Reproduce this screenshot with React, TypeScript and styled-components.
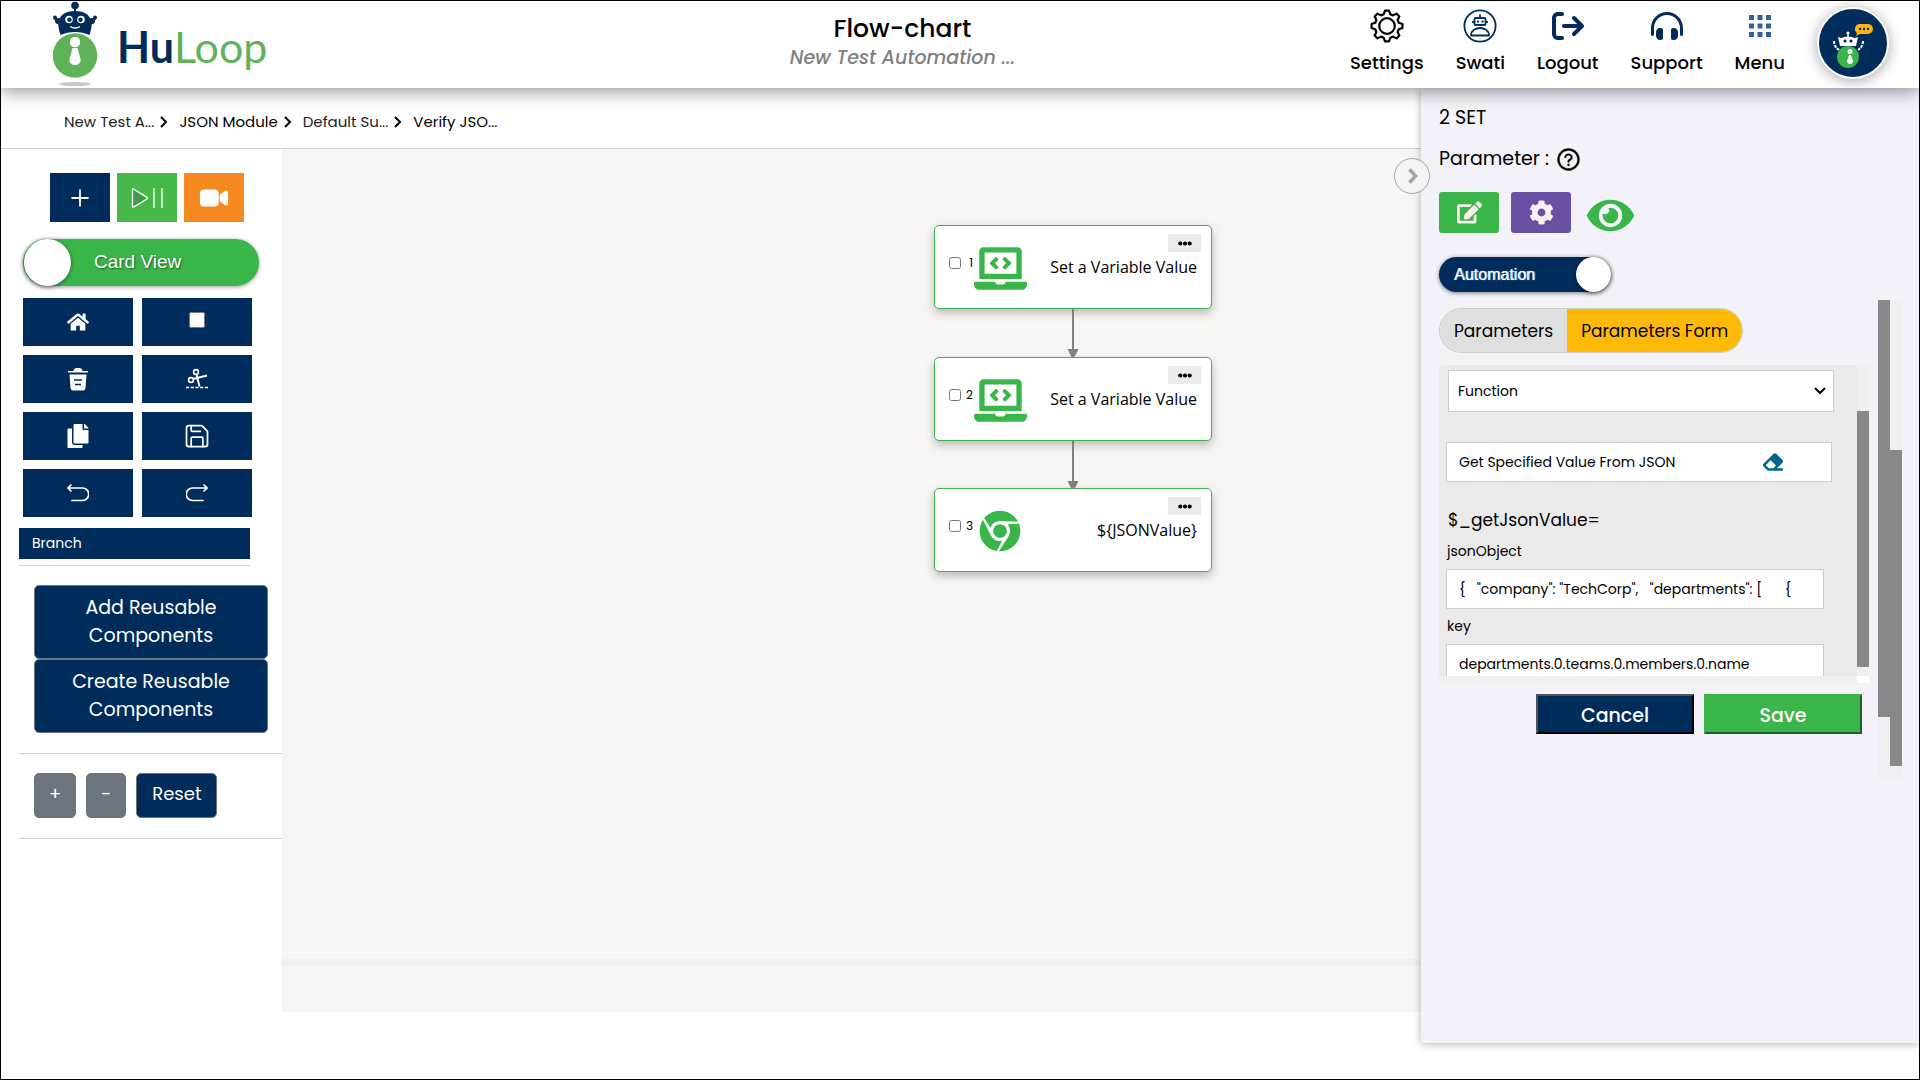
import React from "react";
import styled, { createGlobalStyle } from "styled-components";
import {
  FaHome, FaCopy, FaEdit, FaCog, FaEye, FaLaptopCode, FaChrome, FaEraser,
} from "react-icons/fa";
import { FaArrowRightFromBracket, FaHeadphonesSimple } from "react-icons/fa6";
import { IoVideocam } from "react-icons/io5";
import { AiOutlinePlus, AiOutlineQuestionCircle } from "react-icons/ai";
import { Save } from "lucide-react";

const navy = "#002c5b";
const green = "#3ab54a";

const GlobalStyle = createGlobalStyle`
  *, *::before, *::after { box-sizing: border-box; }
  body { margin: 0; background: #fff; color: #000; font-family: Poppins, Inter, "Open Sans", sans-serif; font-size: 16px; }
  button, input, select { font-family: inherit; margin: 0; }
  button { cursor: pointer; }
  h1, p { margin: 0; }
`;

const Page = styled.div`
  min-height: 100vh;
  border: 1px solid #000;
  display: flex;
  flex-direction: column;
`;

/* ---------- header ---------- */
const Header = styled.header`
  display: grid;
  grid-template-columns: 34% 26% 40%;
  height: 87px;
  background: #fff;
  box-shadow: 0 4px 16px rgba(0, 0, 0, 0.4);
  z-index: 3;
`;
const Logo = styled.a`
  display: flex;
  padding-left: 49px;
  gap: 17px;
  text-decoration: none;
`;
const Wordmark = styled.span`
  padding-top: 20px;
  font: 400 43px/52px Lato, sans-serif;
  color: #5fb257;
  b { color: ${navy}; font-weight: 700; }
`;
const Heading = styled.div`
  padding-top: 12px;
  text-align: center;
`;
const Title = styled.h1`
  font-size: 25px;
  line-height: 32px;
  font-weight: 500;
`;
const Subtitle = styled.p`
  font-size: 19px;
  line-height: 26px;
  font-weight: 500;
  font-style: italic;
  color: #808080;
`;
const Nav = styled.nav`
  display: flex;
  justify-content: flex-end;
  gap: 32px;
  padding-right: 30px;
`;
const NavItem = styled.a`
  display: flex;
  flex-direction: column;
  align-items: center;
  gap: 6px;
  padding-top: 8px;
  color: #000;
  text-decoration: none;
  font-size: 18px;
  line-height: 28px;
  font-weight: 500;
`;
const NavIcon = styled.span`
  display: flex;
  align-items: center;
  justify-content: center;
  height: 34px;
  color: ${navy};
`;
const Avatar = styled.button`
  width: 72px;
  height: 72px;
  margin-top: 6px;
  padding: 0;
  border: 2px solid #fff;
  border-radius: 50%;
  background: ${navy};
  box-shadow: 0 2px 14px rgba(0, 0, 0, 0.35);
`;

/* ---------- layout ---------- */
const Main = styled.main`
  display: flex;
  align-items: flex-start;
`;
const Work = styled.div`
  flex: 1;
  min-width: 0;
`;
const Crumbs = styled.nav`
  display: flex;
  align-items: center;
  height: 61px;
  padding: 7px 0 0 63px;
  border-bottom: 1px solid #ccc;
`;
const Crumb = styled.a<{ $soft?: boolean }>`
  font-size: 15px;
  line-height: 24px;
  color: ${(p) => (p.$soft ? "#222" : "#000")};
  text-decoration: none;
`;
const CrumbArrow = styled.svg`
  margin: 0 11px 0 6px;
`;
const Body = styled.div`
  display: flex;
`;
const Sidebar = styled.aside`
  width: 281px;
  flex: none;
  padding-left: 18px;
`;

/* ---------- sidebar ---------- */
const QuickRow = styled.div`
  display: flex;
  gap: 7px;
  padding: 24px 0 0 31px;
`;
const QuickButton = styled.button<{ $bg: string }>`
  display: flex;
  align-items: center;
  justify-content: center;
  width: 60px;
  height: 49px;
  padding: 0;
  border: 0;
  color: #fff;
  background: ${(p) => p.$bg};
`;
const HiddenCheck = styled.input`
  appearance: none;
  width: 0;
  height: 0;
  margin: 0;
`;
const CardToggle = styled.label`
  display: flex;
  align-items: center;
  width: 236px;
  height: 47px;
  margin: 17px 0 12px 4px;
  padding-left: 1px;
  border-radius: 24px;
  background: ${green};
  box-shadow: 0 1px 4px rgba(0, 0, 0, 0.4);
  color: #fff;
  font: 19px/24px "Liberation Sans", sans-serif;
  text-shadow: 1px 1px 2px rgba(0, 0, 0, 0.5);
`;
const Knob = styled.span<{ $size: number }>`
  width: ${(p) => p.$size}px;
  height: ${(p) => p.$size}px;
  border-radius: 50%;
  background: #fff;
  box-shadow: 0 1px 4px rgba(0, 0, 0, 0.5);
`;
const CardToggleText = styled.span`
  padding: 0 0 2px 23px;
`;
const ToolGrid = styled.div`
  display: grid;
  grid-template-columns: 110px 110px;
  gap: 9px;
  padding-left: 4px;
`;
const Tool = styled.button`
  display: flex;
  align-items: center;
  justify-content: center;
  height: 48px;
  padding: 0;
  border: 0;
  background: ${navy};
  color: #fff;
`;
const ToolLabel = styled.label`
  display: flex;
  align-items: center;
  justify-content: center;
  height: 48px;
  padding-bottom: 4px;
  background: ${navy};
`;
const ToolCheck = styled.input`
  width: 16px;
  height: 16px;
`;
const Branch = styled.button`
  display: block;
  width: 231px;
  height: 31px;
  margin-top: 11px;
  padding: 0 13px 2px;
  border: 0;
  background: ${navy};
  color: #fff;
  font-size: 14px;
  line-height: 24px;
  text-align: left;
`;
const Rule = styled.hr<{ $short?: boolean }>`
  height: 1px;
  margin: 0;
  margin-top: ${(p) => (p.$short ? 6 : 20)}px;
  margin-right: ${(p) => (p.$short ? 32 : 0)}px;
  border: 0;
  background: #d0d0d0;
`;
const Reusable = styled.div`
  display: flex;
  flex-direction: column;
  width: 234px;
  margin: 19px 0 0 15px;
`;
const ReusableButton = styled.button`
  height: 74px;
  padding: 0 24px;
  border: 1px solid #6c757d;
  border-radius: 5px;
  background: ${navy};
  color: #fff;
  font-size: 19px;
  line-height: 28px;
`;
const ZoomRow = styled.div`
  display: flex;
  gap: 10px;
  padding: 19px 0 0 15px;
`;
const ZoomButton = styled.button<{ $reset?: boolean }>`
  height: 45px;
  padding: 0 ${(p) => (p.$reset ? 15 : 14)}px 3px;
  border: 1px solid #6c757d;
  border-radius: 5px;
  background: ${(p) => (p.$reset ? navy : "#6c757d")};
  color: #fff;
  font-size: 18px;
  line-height: 28px;
`;

/* ---------- canvas ---------- */
const CanvasArea = styled.div`
  flex: 1;
  min-width: 0;
  height: calc(100vh - 217px);
  display: flex;
  flex-direction: column;
  background: #f7f6f5;
`;
const Canvas = styled.section`
  position: relative;
  flex: 1;
`;
const CanvasScroll = styled.div`
  height: 7px;
  margin-bottom: 46px;
  background: #f0f0f0;
`;
const Node = styled.article`
  position: absolute;
  display: flex;
  width: 278px;
  height: 84px;
  padding: 8px 10px 0 14px;
  border: 1px solid ${green};
  border-radius: 5px;
  background: #fff;
  box-shadow: 0 4px 10px rgba(0, 0, 0, 0.25);
`;
const NodeCheck = styled.label`
  display: flex;
  align-items: center;
  justify-content: space-between;
  width: 24px;
  height: 58px;
  font-size: 12px;
`;
const NodeBox = styled.input`
  width: 12px;
  height: 12px;
`;
const NodeIcon = styled.span`
  display: flex;
  align-items: center;
  justify-content: center;
  width: 54px;
  height: 68px;
  color: ${green};
`;
const NodeText = styled.div`
  flex: 1;
  display: flex;
  flex-direction: column;
  align-items: flex-end;
`;
const NodeMenu = styled.button`
  width: 33px;
  height: 18px;
  padding: 0;
  border: 0;
  background: #ebebeb;
  line-height: 0;
`;
const NodeLabel = styled.span`
  padding: 3px 4px 0 0;
  font: 16px/24px "Open Sans", "Noto Sans", sans-serif;
`;
const Edge = styled.svg`
  position: absolute;
`;

/* ---------- properties panel ---------- */
const Panel = styled.aside`
  position: relative;
  flex: none;
  width: 498px;
  height: calc(100vh - 125px);
  padding: 16px 17px 0 18px;
  background: #f3f2f9;
  box-shadow: 0 1px 8px rgba(0, 0, 0, 0.3);
`;
const Collapse = styled.button`
  position: absolute;
  left: -27px;
  top: 70px;
  width: 36px;
  height: 36px;
  padding: 0 0 0 2px;
  border: 1px solid #a5a3a3;
  border-radius: 50%;
  background: #f5f4f5;
  color: #a5a3a3;
  line-height: 0;
`;
const PanelText = styled.p`
  display: flex;
  align-items: center;
  gap: 7px;
  font-size: 19px;
  line-height: 28px;
  margin-bottom: 13px;
`;
const Actions = styled.div`
  display: flex;
  gap: 12px;
  margin: 19px 0 24px;
`;
const ActionButton = styled.button<{ $bg: string }>`
  display: flex;
  align-items: center;
  justify-content: center;
  width: 60px;
  height: 41px;
  padding: 0;
  border: 0;
  border-radius: 3px;
  background: ${(p) => p.$bg};
  color: #fbeff1;
`;
const PreviewButton = styled.button`
  display: flex;
  align-items: center;
  height: 41px;
  padding: 6px 0 0 4px;
  border: 0;
  background: none;
  color: ${green};
`;
const ModeToggle = styled.label`
  display: flex;
  align-items: center;
  justify-content: space-between;
  width: 172px;
  height: 35px;
  margin-bottom: 8px;
  padding-left: 15px;
  border-radius: 18px;
  background: ${navy};
  box-shadow: 0 1px 4px rgba(0, 0, 0, 0.5);
  color: #fff;
  font: 16px/20px "Liberation Sans", sans-serif;
  text-shadow: 1px 0 1px rgba(255, 255, 255, 0.8);
`;
const Scroller = styled.div`
  display: flex;
  height: 480px;
`;
const ScrollerContent = styled.div`
  flex: 1;
  min-width: 0;
  padding: 8px 9px 0 0;
`;
const Track = styled.div<{ $top: number; $bottom: number }>`
  width: 12px;
  display: flex;
  padding: ${(p) => p.$top}px 0 ${(p) => p.$bottom}px;
  background: #f0f0f0;
`;
const Thumb = styled.div`
  flex: 1;
  background: #888;
`;
const Tabs = styled.div`
  display: flex;
  width: fit-content;
  height: 45px;
  border: 1px solid #ccc;
  border-radius: 23px;
  overflow: hidden;
`;
const Tab = styled.button<{ $active?: boolean }>`
  padding: 0 14px;
  border: 0;
  background: ${(p) => (p.$active ? "#ffba08" : "#dfdfdf")};
  color: #000;
  font-size: 17px;
  line-height: 24px;
`;
const FormFrame = styled.div`
  display: flex;
  height: 311px;
  margin-top: 12px;
  border-radius: 5px 0 0 0;
  overflow: hidden;
  background: #eaeaea;
`;
const Form = styled.div`
  flex: 1;
  min-width: 0;
  padding: 5px 25px 0 7px;
  overflow: hidden;
`;
const BottomTrack = styled.div`
  height: 7px;
  display: flex;
  justify-content: flex-end;
  background: #f0f0f0;
`;
const Corner = styled.span`
  width: 12px;
  background: #fff;
`;
const SelectWrap = styled.div`
  display: grid;
  align-items: center;
  margin: 0 -2px 0 2px;
  svg { grid-area: 1 / 1; justify-self: end; margin-right: 8px; pointer-events: none; }
`;
const Select = styled.select`
  grid-area: 1 / 1;
  appearance: none;
  width: 100%;
  height: 42px;
  padding: 0 9px;
  border: 1px solid #ccc;
  border-radius: 0;
  background: #fff;
  color: #000;
  font-size: 14px;
`;
const Lookup = styled.div`
  display: flex;
  align-items: center;
  height: 40px;
  margin: 30px 0 24px;
  padding-right: 48px;
  border: 1px solid #ccc;
  background: #fff;
  color: #00668a;
`;
const LookupInput = styled.input`
  flex: 1;
  min-width: 0;
  padding: 0 12px;
  border: 0;
  background: transparent;
  font-size: 14px;
  color: #000;
`;
const Clear = styled.button`
  padding: 0;
  border: 0;
  background: none;
  color: inherit;
  line-height: 0;
`;
const FnName = styled.p`
  padding-left: 2px;
  font-size: 17px;
  line-height: 28px;
`;
const Field = styled.label`
  display: block;
  margin-right: 8px;
  font-size: 14px;
  line-height: 35px;
`;
const FieldName = styled.span`
  padding-left: 1px;
`;
const TextInput = styled.input`
  display: block;
  width: 100%;
  height: 40px;
  padding: 0 12px;
  border: 1px solid #ccc;
  background: #fff;
  color: #000;
  font-size: 14px;
`;
const Footer = styled.div`
  display: flex;
  justify-content: flex-end;
  gap: 10px;
  padding: 11px 7px 0 0;
`;
const FooterButton = styled.button<{ $save?: boolean }>`
  width: 158px;
  height: 40px;
  padding: 3px 0 0;
  border: 2px outset ${(p) => (p.$save ? green : "#000")};
  background: ${(p) => (p.$save ? green : navy)};
  color: #fff;
  font-size: 19px;
  line-height: 24px;
  font-weight: 500;
`;

/* ---------- drawings ---------- */
const gearPath = (() => {
  const pts: string[] = [];
  const n = 8;
  for (let i = 0; i < n; i++) {
    const a = (i * 2 * Math.PI) / n - Math.PI / 2;
    [[-0.27, 12.2], [-0.13, 15.6], [0.13, 15.6], [0.27, 12.2]].forEach(([d, r]) => {
      pts.push(`${(17 + r * Math.cos(a + d)).toFixed(2)} ${(17 + r * Math.sin(a + d)).toFixed(2)}`);
    });
  }
  return "M" + pts.join("L") + "Z";
})();

const GearIcon = () => (
  <svg width="34" height="34" viewBox="0 0 34 34" fill="none" stroke="#000" strokeWidth="2.2" strokeLinejoin="round">
    <path d={gearPath} /><circle cx="17" cy="17" r="7.8" />
  </svg>
);
const UserBotIcon = () => (
  <svg width="34" height="34" viewBox="0 0 34 34" fill="none" stroke={navy} strokeWidth="1.8">
    <circle cx="17" cy="17" r="15.6" />
    <rect x="11.5" y="9" width="11" height="7" rx="1" />
    <path d="M17 5.5V9M10 12v2M24 12v2" />
    <path d="M14 12.5h2M18.500 12.5h2" strokeWidth="2" />
    <path d="M8 26.500c0-10 18-10 18 0z" strokeLinejoin="round" />
  </svg>
);
const MenuIcon = () => (
  <svg width="22" height="22" viewBox="0 0 22 22" fill="#31609a">
    {[0, 8.5, 17].map((y) => [0, 8.5, 17].map((x) => <rect key={`${x}-${y}`} x={x} y={y} width="5" height="5" />))}
  </svg>
);
const RobotLogo = () => (
  <svg width="50" height="86" viewBox="0 0 50 86">
    <ellipse cx="25" cy="83" rx="16" ry="2" fill="#c8c8c8" />
    <g fill={navy}>
      <circle cx="25" cy="4.500" r="3.800" />
      <rect x="24" y="6" width="2" height="7" />
      <path d="M25 10c8 0 14 3 16 9l1 1c0 4-1 10-2.500 14-9-4-20-4-29 0C9 30 8 24 8 20l1-1c2-6 8-9 16-9z" />
      <circle cx="5" cy="16.500" r="2" /><circle cx="45" cy="16.500" r="2" />
      <path d="M5 17l4 5M45 17l-4 5" stroke={navy} strokeWidth="3" />
      <circle cx="8" cy="20" r="3" /><circle cx="42" cy="20" r="3" />
    </g>
    <circle cx="19" cy="18.500" r="3.800" fill="#fff" /><circle cx="31" cy="18.500" r="3.800" fill="#fff" />
    <circle cx="19.500" cy="18.800" r="2.200" fill={navy} /><circle cx="30.500" cy="18.800" r="2.200" fill={navy} />
    <path d="M20 25.500q5 3 10 0" fill="none" stroke="#fff" strokeWidth="1.300" />
    <circle cx="25" cy="54.500" r="22.300" fill="#5fb257" />
    <circle cx="25" cy="41" r="5.200" fill="#fff" />
    <path d="M22.500 47h5l3 11c1 8-12 8-11 0z" fill="#fff" />
  </svg>
);
const AvatarBot = () => (
  <svg width="68" height="68" viewBox="0 0 68 68">
    <path d="M41 15h8a5 5 0 0 1 0 10h-8l-4 2 1-3a5 5 0 0 1 3-9z" fill="#fdb515" />
    <g fill={navy}><circle cx="41" cy="20" r="1.200" /><circle cx="45" cy="20" r="1.200" /><circle cx="49" cy="20" r="1.200" /></g>
    <g fill="#fff">
      <circle cx="29" cy="24" r="1.600" /><rect x="28.300" y="24" width="1.400" height="5" />
      <path d="M22 29q7-3 14 0l3-1-2 9H21l-2-9z" />
    </g>
    <path d="M15 32c0 4 2 7 5 9M44 32c0 4-2 7-5 9" fill="none" stroke="#fff" strokeWidth="2" strokeDasharray="3 1" />
    <circle cx="26" cy="32" r="1.600" fill={navy} /><circle cx="32" cy="32" r="1.600" fill={navy} />
    <circle cx="29" cy="48" r="11" fill={green} />
    <circle cx="31" cy="42.500" r="2.500" fill="#fff" /><path d="M30 46h2l2 6c0 4-6 4-6 0z" fill="#fff" />
  </svg>
);
const PlayPauseIcon = () => (
  <svg width="32" height="22" viewBox="0 0 32 22" fill="none" stroke="#fff" strokeWidth="1.300">
    <path d="M1.500 2.500v17q0 1 1 .6L16 12q.8-1 0-1.600L2.500 2q-1-.4-1 .5z" fill="#449a4c" />
    <path d="M23 1v20M31 1v20" />
  </svg>
);
const TrashIcon = () => (
  <svg width="22" height="24" viewBox="0 0 22 24" fill="#fff">
    <path d="M1 4h5.500q.5-3 3-3h3q2.500 0 3 3H21v1.600H1z" />
    <path d="M2.500 7.500h17l-1 13.500q-.3 2.500-2.500 2.500H6q-2.200 0-2.500-2.500z" />
    <path d="M7 13h8M8 17.500h6" stroke={navy} strokeWidth="1.600" />
  </svg>
);
const CutIcon = () => (
  <svg width="22" height="22" viewBox="0 0 22 22" fill="none" stroke="#fff" strokeWidth="1.600">
    <circle cx="10" cy="4" r="2.400" /><circle cx="5" cy="12" r="2.400" />
    <path d="M10.500 6.500l3 12M7 11l14-3.500" strokeWidth="1.900" />
    <path d="M0 19.500h22" strokeDasharray="3.200 1.500" />
  </svg>
);
const UndoIcon = ({ flip }: { flip?: boolean }) => (
  <svg width="22" height="18" viewBox="0 0 22 18" fill="none" stroke="#fff" strokeWidth="1.700" strokeLinecap="round">
    <g transform={flip ? "matrix(-1 0 0 1 22 0)" : undefined}>
      <path d="M4 1L1 4l3 3M1 4h14.500a6 6 0 0 1 0 12.500H5" />
    </g>
  </svg>
);
const DotsIcon = () => (
  <svg width="14" height="5" viewBox="0 0 14 5"><circle cx="2.300" cy="2.500" r="2.100" /><circle cx="7" cy="2.500" r="2.100" /><circle cx="11.700" cy="2.500" r="2.100" /></svg>
);
const CollapseIcon = () => (
  <svg width="10" height="16" viewBox="0 0 10 16" fill="none" stroke="currentColor" strokeWidth="3.500"><path d="M1.500 1.500L7.500 8l-6 6.500" /></svg>
);

const nodes = [
  { id: 1, label: "Set a Variable Value", icon: <FaLaptopCode size={53} />, top: 76 },
  { id: 2, label: "Set a Variable Value", icon: <FaLaptopCode size={53} />, top: 208 },
  { id: 3, label: "${JSONValue}", icon: <FaChrome size={42} />, top: 339 },
];
const crumbs = ["New Test A...", "JSON Module", "Default Su...", "Verify JSO..."];

export default function App() {
  return (
    <>
      <GlobalStyle />
      <Page>
        <Header>
          <Logo href="#" aria-label="HuLoop">
            <RobotLogo />
            <Wordmark><b>Hu</b>Loop</Wordmark>
          </Logo>
          <Heading>
            <Title>Flow-chart</Title>
            <Subtitle>New Test Automation ...</Subtitle>
          </Heading>
          <Nav>
            <NavItem href="#"><NavIcon><GearIcon /></NavIcon>Settings</NavItem>
            <NavItem href="#"><NavIcon><UserBotIcon /></NavIcon>Swati</NavItem>
            <NavItem href="#"><NavIcon><FaArrowRightFromBracket size={32} /></NavIcon>Logout</NavItem>
            <NavItem href="#"><NavIcon><FaHeadphonesSimple size={32} /></NavIcon>Support</NavItem>
            <NavItem href="#"><NavIcon><MenuIcon /></NavIcon>Menu</NavItem>
            <Avatar aria-label="Assistant"><AvatarBot /></Avatar>
          </Nav>
        </Header>
        <Main>
          <Work>
            <Crumbs aria-label="Breadcrumb">
              {crumbs.map((c, i) => (
                <React.Fragment key={c}>
                  <Crumb href="#" $soft={i % 2 === 0}>{c}</Crumb>
                  {i < 3 && (
                    <CrumbArrow width="8" height="12" viewBox="0 0 8 12" fill="none" stroke="#000" strokeWidth="2">
                      <path d="M1 1l5 5-5 5" />
                    </CrumbArrow>
                  )}
                </React.Fragment>
              ))}
            </Crumbs>
            <Body>
              <Sidebar>
                <QuickRow>
                  <QuickButton $bg={navy} aria-label="Add"><AiOutlinePlus size={24} /></QuickButton>
                  <QuickButton $bg="#46b94a" aria-label="Play or pause"><PlayPauseIcon /></QuickButton>
                  <QuickButton $bg="#f68920" aria-label="Record"><IoVideocam size={30} /></QuickButton>
                </QuickRow>
                <CardToggle>
                  <HiddenCheck type="checkbox" />
                  <Knob $size={47} />
                  <CardToggleText>Card View</CardToggleText>
                </CardToggle>
                <ToolGrid>
                  <Tool aria-label="Home"><FaHome size={22} /></Tool>
                  <ToolLabel><ToolCheck type="checkbox" aria-label="Select all" /></ToolLabel>
                  <Tool aria-label="Delete"><TrashIcon /></Tool>
                  <Tool aria-label="Cut"><CutIcon /></Tool>
                  <Tool aria-label="Copy"><FaCopy size={24} /></Tool>
                  <Tool aria-label="Save"><Save size={28} strokeWidth={1.5} /></Tool>
                  <Tool aria-label="Undo"><UndoIcon /></Tool>
                  <Tool aria-label="Redo"><UndoIcon flip /></Tool>
                </ToolGrid>
                <Branch>Branch</Branch>
                <Rule $short />
                <Reusable>
                  <ReusableButton>Add Reusable Components</ReusableButton>
                  <ReusableButton>Create Reusable Components</ReusableButton>
                </Reusable>
                <Rule />
                <ZoomRow>
                  <ZoomButton>+</ZoomButton>
                  <ZoomButton>-</ZoomButton>
                  <ZoomButton $reset>Reset</ZoomButton>
                </ZoomRow>
                <Rule />
              </Sidebar>
              <CanvasArea>
                <Canvas>
                  {nodes.map((n) => (
                    <Node key={n.id} style={{ left: 652, top: n.top }}>
                      <NodeCheck><NodeBox type="checkbox" />{n.id}</NodeCheck>
                      <NodeIcon>{n.icon}</NodeIcon>
                      <NodeText>
                        <NodeMenu aria-label="Step menu"><DotsIcon /></NodeMenu>
                        <NodeLabel>{n.label}</NodeLabel>
                      </NodeText>
                    </Node>
                  ))}
                  {nodes.slice(0, -1).map((n) => (
                    <Edge key={n.id} width="12" height="48" viewBox="0 0 12 48" fill="#808080" style={{ left: 785, top: n.top + 84 }}>
                      <rect x="5" width="2" height="44" /><path d="M.5 40h11L7.500 48h-3z" />
                    </Edge>
                  ))}
                </Canvas>
                <CanvasScroll />
              </CanvasArea>
            </Body>
          </Work>
          <Panel>
            <Collapse aria-label="Collapse panel"><CollapseIcon /></Collapse>
            <PanelText>2 SET</PanelText>
            <PanelText>Parameter : <AiOutlineQuestionCircle size={25} strokeWidth={20} /></PanelText>
            <Actions>
              <ActionButton $bg={green} aria-label="Edit"><FaEdit size={25} /></ActionButton>
              <ActionButton $bg="#6850a4" aria-label="Configure"><FaCog size={25} /></ActionButton>
              <PreviewButton aria-label="Preview"><FaEye size={47} /></PreviewButton>
            </Actions>
            <ModeToggle>
              Automation
              <HiddenCheck type="checkbox" defaultChecked />
              <Knob $size={35} />
            </ModeToggle>
            <Scroller>
              <ScrollerContent>
                <Tabs>
                  <Tab>Parameters</Tab>
                  <Tab $active>Parameters Form</Tab>
                </Tabs>
                <FormFrame>
                  <Form>
                    <SelectWrap>
                      <Select aria-label="Value type"><option>Function</option></Select>
                      <svg width="12" height="8" viewBox="0 0 12 8" fill="none" stroke="#000" strokeWidth="2"><path d="M1 1l5 5 5-5" /></svg>
                    </SelectWrap>
                    <Lookup>
                      <LookupInput aria-label="Function name" defaultValue="Get Specified Value From JSON" />
                      <Clear aria-label="Clear"><FaEraser size={20} /></Clear>
                    </Lookup>
                    <FnName>$_getJsonValue=</FnName>
                    <Field>
                      <FieldName>jsonObject</FieldName>
                      <TextInput defaultValue={'{   "company": "TechCorp",   "departments": [      {'} />
                    </Field>
                    <Field>
                      <FieldName>key</FieldName>
                      <TextInput defaultValue="departments.0.teams.0.members.0.name" />
                    </Field>
                  </Form>
                  <Track $top={46} $bottom={9}><Thumb /></Track>
                </FormFrame>
                <BottomTrack><Corner /></BottomTrack>
                <Footer>
                  <FooterButton>Cancel</FooterButton>
                  <FooterButton $save>Save</FooterButton>
                </Footer>
              </ScrollerContent>
              <Track $top={0} $bottom={63}><Thumb /></Track>
              <Track $top={150} $bottom={14}><Thumb /></Track>
            </Scroller>
          </Panel>
        </Main>
      </Page>
    </>
  );
}
